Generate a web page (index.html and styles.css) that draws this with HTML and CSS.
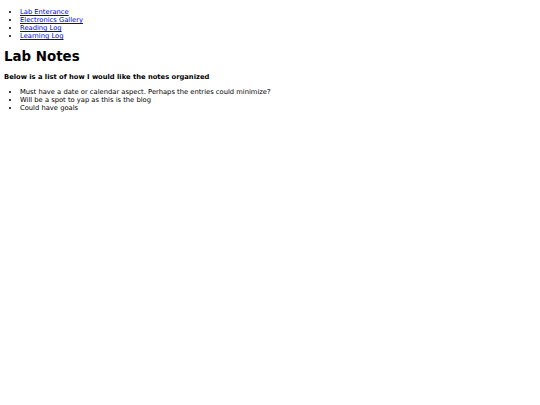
FILE: index.html
```html
<!DOCTYPE html>
<html>
<head>
<meta charset="utf-8">
<link rel="stylesheet" href="styles.css">
<title>Lab Notes</title>
</head>
<body>
<ul class="nav">
  <li><a href="#">Lab Enterance</a></li>
  <li><a href="#">Electronics Gallery</a></li>
  <li><a href="#">Reading Log</a></li>
  <li><a href="#">Learning Log</a></li>
</ul>
<h1 class="title">Lab Notes</h1>
<h4 class="sub">Below is a list of how I would like the notes organized</h4>
<ul class="list">
  <li>Must have a date or calendar aspect. Perhaps the entries could minimize?</li>
  <li>Will be a spot to yap as this is the blog</li>
  <li>Could have goals</li>
</ul>
</body>
</html>
```
FILE: styles.css
```css
body {
  margin: 4px;
  font-family: "DejaVu Sans", sans-serif;
  font-size: 6.75px;
  line-height: 8px;
  color: #000;
  background: #fff;
}
ul {
  margin: 5px 0;
  padding-left: 16px;
}
.nav {
  margin-top: 4px;
}
a {
  color: #0000ee;
}
.title {
  font-size: 13.4px;
  line-height: 16px;
  margin: 9px 0 8px;
}
.sub {
  font-size: 6.75px;
  line-height: 8px;
  margin: 8px 0 7px;
}
```
